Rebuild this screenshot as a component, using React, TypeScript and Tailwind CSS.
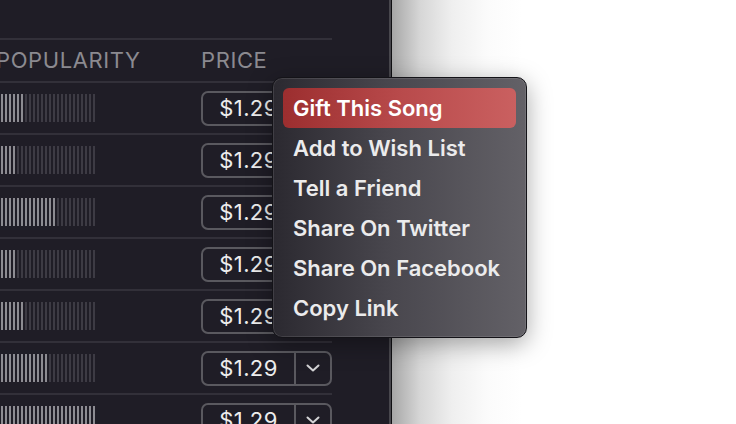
import React from 'react';

const rows = [6, 4, 14, 4, 6, 12, 24];

const menuItems = [
  'Gift This Song',
  'Add to Wish List',
  'Tell a Friend',
  'Share On Twitter',
  'Share On Facebook',
  'Copy Link',
];

const PopularityBars = ({ filled }: { filled: number }) => (
  <div className="flex gap-[2px] pl-[1px]">
    {Array.from({ length: 24 }).map((_, i) => (
      <div
        key={i}
        className={`w-[2px] h-[28px] ${i < filled ? 'bg-[#8d8c92]' : 'bg-[#3d3b44]'}`}
      />
    ))}
  </div>
);

const PriceButton = () => (
  <div className="flex h-[35px] w-[131px] rounded-[7px] border-2 border-[#5a595f] text-[#ededed]">
    <div className="flex w-[93px] items-center justify-center border-r-2 border-[#5a595f] text-[22px] tracking-[0.4px]">
      $1.29
    </div>
    <div className="flex flex-1 items-center justify-center">
      <svg width="14" height="8" viewBox="0 0 14 8" fill="none">
        <polyline
          points="1.5,1.5 7,6.5 12.5,1.5"
          stroke="#d4d4d6"
          strokeWidth="2"
          strokeLinecap="round"
          strokeLinejoin="round"
        />
      </svg>
    </div>
  </div>
);

export default function App() {
  return (
    <div
      className="relative flex h-[424px] w-[736px] overflow-hidden bg-white"
      style={{ fontFamily: 'Inter, "Noto Sans", sans-serif' }}
    >
      {/* song list panel */}
      <div className="h-full w-[389px] shrink-0 overflow-hidden bg-[#1f1d26] pt-[38px]">
        <div className="w-[332px]">
          <div className="flex h-[43px] items-center border-t-2 border-[#323039] text-[22px] tracking-[0.6px] text-[#8b8a90]">
            <div className="-ml-[4px] w-[205px] shrink-0">POPULARITY</div>
            <div>PRICE</div>
          </div>
          {rows.map((filled, i) => (
            <div key={i} className="flex h-[52px] items-center border-t-2 border-[#323039]">
              <div className="w-[201px]">
                <PopularityBars filled={filled} />
              </div>
              <PriceButton />
            </div>
          ))}
        </div>
      </div>
      <div className="h-full w-[2px] shrink-0 bg-[#48474d]" />
      <div className="h-full w-[1px] shrink-0 bg-[#101013]" />
      <div className="h-full flex-1 bg-[linear-gradient(to_right,#a7a7a7,#d6d6d6_28px,#efefef_60px,#fbfbfb_95px,#ffffff_130px)]" />

      {/* context menu */}
      <div className="absolute left-[272px] top-[77px] h-[261px] w-[255px] rounded-[10px] border border-[#141318] bg-[linear-gradient(to_right,#2b2930,#48464d_45%,#636167)] px-[10px] pt-[10px] shadow-[0_6px_24px_rgba(0,0,0,0.35),inset_0_0_0_1px_rgba(255,255,255,0.1)]">
        {menuItems.map((item, i) => (
          <div
            key={item}
            className={`flex h-[40px] items-center rounded-[6px] pl-[10px] text-[22px] font-semibold ${
              i === 0
                ? 'bg-[linear-gradient(to_right,#9c2e2f,#b84a4b_50%,#ca6060)] text-white'
                : 'text-[#ebebec]'
            }`}
          >
            {item}
          </div>
        ))}
      </div>
    </div>
  );
}
